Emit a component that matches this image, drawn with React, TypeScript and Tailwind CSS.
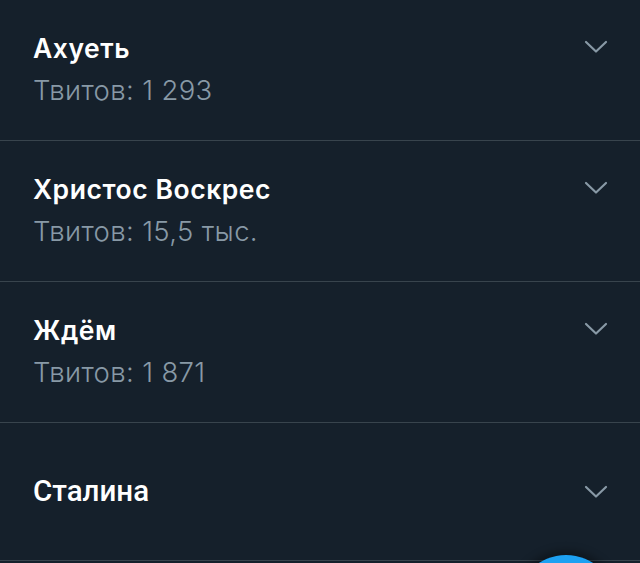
const rows = [
  { title: "Ахуеть", count: "Твитов: 1 293" },
  { title: "Христос Воскрес", count: "Твитов: 15,5 тыс." },
  { title: "Ждём", count: "Твитов: 1 871" },
];

function Chevron() {
  return (
    <svg width="24" height="14" viewBox="0 0 24 14" fill="none" className="shrink-0">
      <path d="M2 2 L12 11.5 L22 2" stroke="#8899a6" strokeWidth="2.2" strokeLinecap="round" strokeLinejoin="round" />
    </svg>
  );
}

export default function App() {
  return (
    <div className="relative h-[563px] w-[640px] overflow-hidden bg-[#15202b] font-['Inter','Noto_Sans',sans-serif]">
      {rows.map((r) => (
        <div key={r.title} className="flex h-[141px] items-start justify-between border-b border-[#38444d] pl-[33px] pr-[32px] pt-[29px]">
          <div className="flex flex-col">
            <p className="text-[26.5px] font-semibold leading-[38px] tracking-[0.55px] text-white">{r.title}</p>
            <p className="mt-[4px] text-[27.5px] font-light leading-[38px] tracking-[0.35px] text-[#8899a6]">{r.count}</p>
          </div>
          <div className="pt-[11px]">
            <Chevron />
          </div>
        </div>
      ))}
      <div className="flex h-[138px] items-center justify-between border-b border-[#38444d] pl-[33px] pr-[32px]">
        <p className="font-['Roboto',sans-serif] text-[29.5px] font-medium text-white">Сталина</p>
        <Chevron />
      </div>
      <div className="absolute left-[516px] top-[555px] h-[100px] w-[100px] rounded-full bg-[#1da1f2] shadow-[0_0_8px_4px_rgba(0,0,0,0.35)]" />
    </div>
  );
}
